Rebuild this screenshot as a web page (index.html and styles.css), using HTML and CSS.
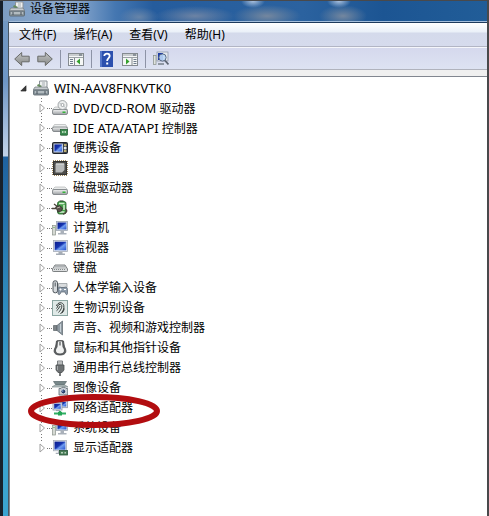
FILE: index.html
```html
<!DOCTYPE html>
<html lang="zh-CN">
<head>
    <meta charset="UTF-8">
    <meta name="viewport" content="width=device-width, initial-scale=1.0">
    <title>设备管理器</title>
    <link rel="stylesheet" href="styles.css">
</head>
<body>
    <!-- Shared gradients and symbols -->
    <svg class="defs" width="0" height="0" aria-hidden="true">
        <defs>
            <linearGradient id="metal" x1="0" y1="0" x2="0" y2="1">
                <stop offset="0" stop-color="#f4f5f5"/><stop offset="1" stop-color="#9a9ea1"/>
            </linearGradient>
            <linearGradient id="screen" x1="0" y1="0" x2="1" y2="1">
                <stop offset="0" stop-color="#0a1c8c"/><stop offset="0.45" stop-color="#1634b0"/><stop offset="0.6" stop-color="#6f9bef"/><stop offset="1" stop-color="#2350cf"/>
            </linearGradient>
            <linearGradient id="arrow" x1="0" y1="0" x2="0" y2="1">
                <stop offset="0" stop-color="#c3c5c6"/><stop offset="1" stop-color="#868886"/>
            </linearGradient>
            <symbol id="drive" viewBox="0 0 16 16">
                <path d="M3 7h10l2.500 2.500h-15z" fill="#e8eaea" stroke="#a7abad" stroke-width=".6"/>
                <rect x=".5" y="9.500" width="15" height="5" rx="1.500" fill="url(#metal)" stroke="#74797c" stroke-width=".8"/>
                <rect x="10.500" y="11.500" width="3" height="1.500" fill="#35b53a"/>
            </symbol>
            <symbol id="pc" viewBox="0 0 16 16">
                <rect x=".5" y="5.500" width="3" height="9.500" fill="#d5d9d3" stroke="#8b938a" stroke-width=".7"/>
                <path d="M1.500 7.500h1" stroke="#4c9a3c"/>
                <rect x="4.500" y="1.500" width="11" height="9" fill="#e4e8ed" stroke="#9aa3b0" stroke-width=".8"/>
                <rect x="5.500" y="2.500" width="9" height="7" fill="url(#screen)"/>
                <path d="M8.500 11h3.500v2h2.500v1.500H6V13h2.500z" fill="#aab1ba"/>
            </symbol>
            <symbol id="monitor" viewBox="0 0 16 16">
                <rect x="1.500" y=".5" width="14" height="11" fill="#e4e8ed" stroke="#a3abb6" stroke-width=".8"/>
                <rect x="2.700" y="1.700" width="11.600" height="8.600" fill="url(#screen)"/>
                <path d="M6.500 12h4v1.500H13V15H4v-1.500h2.500z" fill="#a5acb5"/>
            </symbol>
            <symbol id="root" viewBox="0 0 16 16">
                <path d="M6.500 6V1h7.500v7" fill="#eef0f0" stroke="#8b9298"/>
                <path d="M9 3h3M9 5h3" stroke="#a5acb1"/>
                <path d="M5 4l4 2-1.500 1.500L4 6z" fill="#668c5c"/>
                <path d="M2 7h12l2 3H0z" fill="#c6cbce" stroke="#6f777c" stroke-width=".7"/>
                <rect x=".5" y="10" width="15" height="5" rx="1" fill="#88949b" stroke="#566168" stroke-width=".8"/>
                <path d="M2 12h12" stroke="#dce2e4"/>
                <path d="M4 11v3M12 11v3" stroke="#46515a"/>
            </symbol>
        </defs>
    </svg>

    <div class="window">
        <header class="title-bar">
            <svg class="icon"><use href="#root"/></svg>
            <h1 class="title">设备管理器</h1>
        </header>

        <main class="client">
            <nav class="menu-bar">
                <button type="button" class="menu-item">文件(F)</button>
                <button type="button" class="menu-item">操作(A)</button>
                <button type="button" class="menu-item">查看(V)</button>
                <button type="button" class="menu-item">帮助(H)</button>
            </nav>

            <div class="toolbar">
                <button type="button" class="tool" aria-label="后退">
                    <svg class="icon" viewBox="0 0 16 16"><path d="M.7 8l7-6.500v3.700h7.500v5.600H7.700v3.700z" fill="url(#arrow)" stroke="#696b69"/></svg>
                </button>
                <button type="button" class="tool" aria-label="前进">
                    <svg class="icon" viewBox="0 0 16 16"><path d="M15.300 8l-7-6.500v3.700H.8v5.600h7.500v3.700z" fill="url(#arrow)" stroke="#696b69"/></svg>
                </button>
                <span class="divider"></span>
                <button type="button" class="tool" aria-label="显示/隐藏控制台树">
                    <svg class="icon" viewBox="0 0 16 16">
                        <rect x=".5" y="2.500" width="15" height="12" fill="#f5f7f6" stroke="#858b90"/>
                        <path d="M1 4h14M1 6.500h14" stroke="#9ca2a7"/><path d="M11 4h3" stroke="#4c5964"/>
                        <path d="M6.500 7v7" stroke="#858b90"/>
                        <path d="M2 8.500h3M2 10.500h3M2 12.500h3" stroke="#6d7c8b"/>
                        <path d="M12 7.500v6L8.500 10.500z" fill="#35a02e"/>
                    </svg>
                </button>
                <span class="divider"></span>
                <button type="button" class="tool" aria-label="帮助">
                    <svg class="icon" viewBox="0 0 16 16">
                        <rect x="1" y="0" width="13" height="16" fill="#2c50ae"/>
                        <path d="M1 0h2v16H1z" fill="#5476c8"/>
                        <path d="M5.300 5c0-3.300 5.400-3 5.400 0 0 2-2.600 2.200-2.600 5" fill="none" stroke="#fff" stroke-width="1.800"/>
                        <rect x="7.200" y="11.500" width="2" height="2" fill="#fff"/>
                    </svg>
                </button>
                <button type="button" class="tool" aria-label="显示/隐藏操作窗格">
                    <svg class="icon" viewBox="0 0 16 16">
                        <rect x=".5" y="2.500" width="15" height="12" fill="#f5f7f6" stroke="#858b90"/>
                        <path d="M1 4h14M1 6.500h14" stroke="#9ca2a7"/><path d="M11 4h3" stroke="#4c5964"/>
                        <path d="M10 7v7" stroke="#858b90"/>
                        <path d="M11.500 8.500h3M11.500 10.500h3M11.500 12.500h3" stroke="#6d7c8b"/>
                        <path d="M4 7.500v6l3.500-3z" fill="#35a02e"/>
                    </svg>
                </button>
                <span class="divider"></span>
                <button type="button" class="tool" aria-label="扫描检测硬件改动">
                    <svg class="icon" viewBox="0 0 16 16">
                        <rect x=".5" y="4.500" width="2.500" height="9" fill="#dfe3df" stroke="#858d86" stroke-width=".7"/>
                        <rect x="4" y="1" width="11" height="9" fill="#e4e8ed" stroke="#8791a3" stroke-width=".7"/>
                        <rect x="5" y="2" width="5" height="7" fill="#1c3aa9"/>
                        <path d="M5 13h6" stroke="#8f98a3" stroke-width="2"/>
                        <circle cx="9.500" cy="6.500" r="3.600" fill="#bcd8f5" fill-opacity=".9" stroke="#5c6c86"/>
                        <path d="M12 9.500l3.500 4" stroke="#5c6470" stroke-width="1.800"/>
                    </svg>
                </button>
            </div>

            <section class="tree-pane">
                <ul class="tree">
                    <li>
                        <div class="node">
                            <button type="button" class="toggle open" aria-label="折叠"><svg viewBox="0 0 7 7"><path d="M6 .8V6H.8z" fill="#3c3c3c" stroke="#222" stroke-width=".7"/></svg></button>
                            <svg class="icon"><use href="#root"/></svg>
                            <span class="label"><span class="latin">WIN-AAV8FNKVTK0</span></span>
                        </div>
                        <ul class="branch">
                            <li class="node">
                                <button type="button" class="toggle" aria-label="展开"></button>
                                <svg class="icon" viewBox="0 0 16 16">
                                    <use href="#drive" width="16" height="16"/>
                                    <circle cx="10.500" cy="5" r="4.500" fill="#eceeee" stroke="#8e9396" stroke-width=".8"/>
                                    <path d="M7 2.500l3.500 2.500L14 8" stroke="#c3c8cb"/>
                                    <circle cx="10.500" cy="5" r="1.500" fill="#fff" stroke="#8e9396" stroke-width=".8"/>
                                </svg>
                                <span class="label"><span class="latin">DVD/CD-ROM</span> 驱动器</span>
                            </li>
                            <li class="node">
                                <button type="button" class="toggle" aria-label="展开"></button>
                                <svg class="icon" viewBox="0 0 16 16">
                                    <path d="M2.500 4.500h11l2 3H.5z" fill="#eceeee" stroke="#a7abad" stroke-width=".6"/>
                                    <rect x=".5" y="7" width="15" height="4.500" rx="1.500" fill="url(#metal)" stroke="#74797c" stroke-width=".8"/>
                                    <rect x="8.500" y="9.500" width="7" height="5.500" fill="#3c8b50" stroke="#215f32" stroke-width=".7"/>
                                    <path d="M10 11h1.500v2H10zM12.500 11H14v2h-1.500z" fill="#b6d9b9"/>
                                    <path d="M9.500 15.500h5" stroke="#2b663b" stroke-dasharray="1 1"/>
                                </svg>
                                <span class="label"><span class="latin">IDE ATA/ATAPI</span> 控制器</span>
                            </li>
                            <li class="node">
                                <button type="button" class="toggle" aria-label="展开"></button>
                                <svg class="icon" viewBox="0 0 16 16">
                                    <rect x=".5" y="2.500" width="15" height="11" rx="1" fill="#39404a" stroke="#20242c"/>
                                    <rect x="2" y="4" width="8.500" height="8" fill="url(#screen)" stroke="#dce4ef" stroke-width=".8"/>
                                    <path d="M12 5h2.500M12 11h2.500" stroke="#e7d482" stroke-width="1.400"/>
                                    <circle cx="13.200" cy="8" r="1.500" fill="#e6e9ec"/>
                                </svg>
                                <span class="label">便携设备</span>
                            </li>
                            <li class="node">
                                <button type="button" class="toggle" aria-label="展开"></button>
                                <svg class="icon" viewBox="0 0 16 16">
                                    <rect x="1" y="1" width="14" height="14" fill="none" stroke="#a08a5e" stroke-width="2" stroke-dasharray="1 1"/>
                                    <rect x="1.500" y="1.500" width="13" height="13" fill="#4d4d4a" stroke="#353533"/>
                                    <path d="M4 3.500h8.500V10L10 12.500H3.500V4z" fill="#b8bab9"/>
                                    <path d="M4 4h8" stroke="#e0e2e1"/>
                                </svg>
                                <span class="label">处理器</span>
                            </li>
                            <li class="node">
                                <button type="button" class="toggle" aria-label="展开"></button>
                                <svg class="icon"><use href="#drive"/></svg>
                                <span class="label">磁盘驱动器</span>
                            </li>
                            <li class="node">
                                <button type="button" class="toggle" aria-label="展开"></button>
                                <svg class="icon" viewBox="0 0 16 16">
                                    <rect x="7.500" y="0" width="4" height="2" fill="#8b948b"/>
                                    <rect x="5.500" y="1.500" width="8.500" height="12.500" rx="2" fill="#46a04a" stroke="#235a29" stroke-width=".8"/>
                                    <path d="M7 3.500h5.500M12 5v5M7.500 12h5" stroke="#d4eed2" stroke-width="1.500"/>
                                    <path d="M0 8.500h4M2 4l4 3M13 9c3 1 2 4-2 5" fill="none" stroke="#4e453d" stroke-width="1.300"/>
                                    <path d="M3.500 7l4-1.500 3 2.500-1 3-3.500 1z" fill="#57504a" stroke="#302c29" stroke-width=".7"/>
                                    <path d="M5 8l3-1" stroke="#b9ada4"/>
                                </svg>
                                <span class="label">电池</span>
                            </li>
                            <li class="node">
                                <button type="button" class="toggle" aria-label="展开"></button>
                                <svg class="icon"><use href="#pc"/></svg>
                                <span class="label">计算机</span>
                            </li>
                            <li class="node">
                                <button type="button" class="toggle" aria-label="展开"></button>
                                <svg class="icon"><use href="#monitor"/></svg>
                                <span class="label">监视器</span>
                            </li>
                            <li class="node">
                                <button type="button" class="toggle" aria-label="展开"></button>
                                <svg class="icon" viewBox="0 0 16 16">
                                    <path d="M3 5h10l2.500 4v1.500c0 1-.5 1-1 1h-13c-.5 0-1 0-1-1V9z" fill="#dcdedf" stroke="#5e6365" stroke-width=".8"/>
                                    <path d="M3.500 6.500h9M2.500 8h11M2 9.500h12" stroke="#858b8d" stroke-dasharray="1 1"/>
                                </svg>
                                <span class="label">键盘</span>
                            </li>
                            <li class="node">
                                <button type="button" class="toggle" aria-label="展开"></button>
                                <svg class="icon" viewBox="0 0 16 16">
                                    <rect x="1" y=".8" width="4.500" height="12" rx="2" fill="#d6dadd" stroke="#4f565c"/>
                                    <path d="M3.200 2.500v4" stroke="#4f565c"/>
                                    <path d="M6.500 3.500h8.500v4H6.500z" fill="#d9dcde" stroke="#8c9296" stroke-width=".7"/>
                                    <path d="M6 9c0-2 2-2.500 3-1.500h3c2-1 3.500 0 3.500 2v4c0 1.500-1.500 1.500-2 0L13 12H9l-.7 1.800c-.7 1.200-2 1-2.300-.3z" fill="#8e9cab" stroke="#56616d" stroke-width=".7"/>
                                    <path d="M7.500 9.500h2M8.500 8.500v2M12 9.500h2" stroke="#fff"/>
                                </svg>
                                <span class="label">人体学输入设备</span>
                            </li>
                            <li class="node">
                                <button type="button" class="toggle" aria-label="展开"></button>
                                <svg class="icon" viewBox="0 0 16 16">
                                    <rect x=".5" y=".5" width="15" height="15" fill="#dfe9e7" stroke="#8ba6a2"/>
                                    <g fill="none" stroke="#383d3c" stroke-width="1">
                                        <path d="M4.500 6c1-4 6.500-4.500 7.300-.5.6 3-.8 6-3.300 8.500"/>
                                        <path d="M4.500 8.500C6 7 5.500 4.500 8 4.300c2.700 0 2.500 4-1.500 8.200"/>
                                        <path d="M4.500 10.800C7 9 7 7 8.300 6M10 13c1-1 2-2.500 2.200-4.500"/>
                                    </g>
                                </svg>
                                <span class="label">生物识别设备</span>
                            </li>
                            <li class="node">
                                <button type="button" class="toggle" aria-label="展开"></button>
                                <svg class="icon" viewBox="0 0 16 16">
                                    <path d="M1.500 5.500H5v5H1.500z" fill="#7d8488" stroke="#5d6468" stroke-width=".7"/>
                                    <path d="M5 5.500L10.500 1v14L5 10.500z" fill="#8f9aa2" stroke="#59636a" stroke-width=".7"/>
                                    <path d="M8.500 4v8" stroke="#c6d0d6" stroke-width="1"/>
                                </svg>
                                <span class="label">声音、视频和游戏控制器</span>
                            </li>
                            <li class="node">
                                <button type="button" class="toggle" aria-label="展开"></button>
                                <svg class="icon" viewBox="0 0 16 16">
                                    <path d="M4.500 1C6.500 0 9.500 0 11.500 1c.5 3 .5 5 2 8 1.200 3.500-.5 6-5.500 6s-6.700-2.500-5.500-6c1.500-3 1.500-5 2-8z" fill="#5b5e60" stroke="#45484a" stroke-width=".8"/>
                                    <path d="M6 1.500h4L10.500 7c2.500 3 2 6.500-2.500 6.500S3 10 5.500 7z" fill="#f1f2f2"/>
                                    <path d="M8 2v3.500" stroke="#5a5d5f" stroke-width="1.300"/>
                                </svg>
                                <span class="label">鼠标和其他指针设备</span>
                            </li>
                            <li class="node">
                                <button type="button" class="toggle" aria-label="展开"></button>
                                <svg class="icon" viewBox="0 0 16 16">
                                    <path d="M5.500 1h5v4h-5z" fill="#dadcdd" stroke="#6e7376" stroke-width=".9"/>
                                    <path d="M7 2.500v1M9 2.500v1" stroke="#55595b"/>
                                    <path d="M4 5h8v5l-2 2.500H6L4 10z" fill="#6d7173" stroke="#4c5052" stroke-width=".8"/>
                                    <path d="M5.500 6v4" stroke="#a5a9ab"/>
                                    <path d="M8 12v4" stroke="#55595b" stroke-width="1.600"/>
                                </svg>
                                <span class="label">通用串行总线控制器</span>
                            </li>
                            <li class="node">
                                <button type="button" class="toggle" aria-label="展开"></button>
                                <svg class="icon" viewBox="0 0 16 16">
                                    <path d="M1.500 1.500h13L12 5H4z" fill="#78888a" stroke="#566668" stroke-width=".7"/>
                                    <path d="M0 7l3-2h10l3 2z" fill="#b8c2c3" stroke="#708082" stroke-width=".6"/>
                                    <path d="M7 8.500h2l1-1.200h3l1 1.200h1.700V15H7z" fill="#c7cfd5" stroke="#5f6b73" stroke-width=".8"/>
                                    <circle cx="11.300" cy="11.500" r="2.400" fill="#253b68" stroke="#e7ecef" stroke-width=".8"/>
                                    <circle cx="10.700" cy="11" r=".8" fill="#8fb0df"/>
                                </svg>
                                <span class="label">图像设备</span>
                            </li>
                            <li class="node marked">
                                <button type="button" class="toggle" aria-label="展开"></button>
                                <svg class="icon" viewBox="0 0 16 16">
                                    <rect x="7" y=".7" width="8.500" height="7" fill="#e4e8ed" stroke="#8b96a8" stroke-width=".8"/>
                                    <rect x="8.200" y="1.900" width="6.100" height="4.600" fill="url(#screen)"/>
                                    <rect x="1" y="2.500" width="9" height="7.500" fill="#e4e8ed" stroke="#8b96a8" stroke-width=".8"/>
                                    <rect x="2.200" y="3.700" width="6.600" height="5.100" fill="url(#screen)"/>
                                    <path d="M4 10.500h4" stroke="#9ca6b2" stroke-width="1.200"/>
                                    <path d="M2 13.500h12M8 11v2" stroke="#2fae62" stroke-width="2"/>
                                    <rect x="6" y="11.800" width="4" height="3.700" fill="#23a556"/>
                                </svg>
                                <span class="label">网络适配器</span>
                                <svg class="ring" viewBox="0 0 132 34" aria-hidden="true"><ellipse cx="66" cy="17" rx="63" ry="14" fill="none" stroke="#b20d10" stroke-width="6"/></svg>
                            </li>
                            <li class="node">
                                <button type="button" class="toggle" aria-label="展开"></button>
                                <svg class="icon"><use href="#pc"/></svg>
                                <span class="label">系统设备</span>
                            </li>
                            <li class="node">
                                <button type="button" class="toggle" aria-label="展开"></button>
                                <svg class="icon" viewBox="0 0 16 16">
                                    <use href="#monitor" width="15" height="15"/>
                                    <rect x="7.500" y="10.500" width="8" height="4.500" fill="#497d58" stroke="#28543a" stroke-width=".8"/>
                                    <path d="M9 12h2v1.500H9zM12.500 12H14v1.500h-1.500z" fill="#b7cfbb"/>
                                </svg>
                                <span class="label">显示适配器</span>
                            </li>
                        </ul>
                    </li>
                </ul>
            </section>
        </main>
    </div>

    <script>
        // Collapsed nodes all share the same hollow arrow
        document.querySelectorAll('.branch .toggle').forEach(function(btn) {
            btn.innerHTML = '<svg viewBox="0 0 7 10"><path d="M1 1l4.500 4L1 9z" fill="#fff" stroke="#a0a0a0"/></svg>';
        });
    </script>
</body>
</html>
```
FILE: styles.css
```css
* {
    margin: 0;
    padding: 0;
    box-sizing: border-box;
}
body {
    min-height: 100vh;
    display: flex;
    background-color: #49494b;
    padding: 1px 2px 0 0;
    font-family: "Noto Sans", "Noto Sans CJK SC", sans-serif;
    font-size: 12px;
    line-height: 20px;
    color: #000;
}
ul {
    list-style: none;
}
button {
    border: none;
    background: none;
    font: inherit;
    color: inherit;
}
.defs {
    position: absolute;
}
.icon {
    width: 16px;
    height: 16px;
    flex: none;
}
.window {
    flex: 1;
    display: flex;
    flex-direction: column;
    border-left: 3px solid #17202b;
    padding-left: 5px;
    background: linear-gradient(#7499c1, #6d96c6 80px, #c2d3e8 155px, #1f62a0 156px, #2b7fb4 260px, #3ba3d0 400px, #3ba3d0);
}

/* Title bar */
.title-bar {
    display: flex;
    align-items: center;
    gap: 5px;
    height: 20px;
    margin-left: -5px;
    padding: 0 0 5px 6px;
    background:
        radial-gradient(ellipse 20px 10px at 136px 16px, rgba(116, 140, 170, 0.8), transparent),
        radial-gradient(ellipse 40px 10px at 192px 15px, rgba(116, 135, 165, 0.9), transparent),
        radial-gradient(ellipse 34px 11px at 264px 15px, #74879f, transparent),
        radial-gradient(ellipse 24px 11px at 340px 15px, #74879f, transparent),
        radial-gradient(ellipse 12px 7px at 250px 0, #a9c0dd, transparent),
        radial-gradient(ellipse 12px 7px at 336px 0, #a9c0dd, transparent),
        linear-gradient(90deg, #7c9dc3, #8eabcf 70px, #4577b1 112px, #255c9d 150px, #2b629f 300px, #1c5593 380px, #215d98);
}
.title {
    font-size: 12px;
    font-weight: normal;
}

/* Client area */
.client {
    flex: 1;
    display: flex;
    flex-direction: column;
    border-left: 1px solid #4a5763;
    border-top: 1px solid #a4bedb;
    background-color: #f0f0f0;
}
.menu-bar {
    display: flex;
    align-items: center;
    gap: 17px;
    height: 25px;
    padding-left: 10px;
    border-top: 1px solid #1d3a5c;
    border-bottom: 1px solid #b2b5c4;
    background: linear-gradient(#fff, #eaf0f8 9px, #d4daeb 10px, #d6dbed);
}
.toolbar {
    display: flex;
    align-items: center;
    gap: 7px;
    height: 23px;
    padding-left: 5px;
    border-top: 1px solid #f5f6fb;
    border-bottom: 1px solid #b0b3bd;
    background: linear-gradient(#d5d8ed, #dde3f2);
}
.tool {
    display: flex;
}
.divider {
    width: 1px;
    height: 18px;
    background-color: #8d93a6;
}

/* Device tree */
.tree-pane {
    flex: 1;
    margin-top: 6px;
    border-top: 1px solid #828790;
    border-left: 1px solid #828790;
    background-color: #fff;
}
.tree {
    padding: 1px 0 0 10px;
}
.node {
    display: flex;
    align-items: center;
    height: 20px;
}
.node .label {
    margin-left: 5px;
    white-space: nowrap;
}
.latin {
    font-size: 13px;
}
.toggle {
    display: flex;
    width: 13px;
    background: linear-gradient(90deg, #777 1px, transparent 1px) 10px 5px / 2px 1px repeat-x;
}
.toggle svg {
    width: 7px;
    height: 10px;
    background-color: #fff;
    margin-right: 2px;
}
.toggle.open svg {
    height: 7px;
}
.toggle.open {
    background: none;
}
.branch {
    padding-left: 19px;
    background: repeating-linear-gradient(#777 0, #777 1px, transparent 1px, transparent 3px) 21px 0 / 1px 350px no-repeat;
}

/* Red ring around the network adapters */
.marked {
    position: relative;
}
.ring {
    position: absolute;
    left: -11px;
    top: -4px;
    width: 132px;
    height: 34px;
    pointer-events: none;
}
```
